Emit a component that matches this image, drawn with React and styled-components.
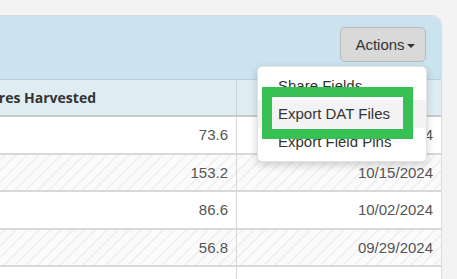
import styled, { createGlobalStyle } from "styled-components";

const Global = createGlobalStyle`
  html, body {
    margin: 0;
    padding: 0;
    background: #f3f3f3;
    font-family: "Liberation Sans", Arial, sans-serif;
    overflow: hidden;
  }
`;

const Page = styled.div`
  width: 457px;
  height: 279px;
  overflow: hidden;
  padding-top: 15px;
  box-sizing: border-box;
`;

const Panel = styled.div`
  position: relative;
  margin-left: -40px;
  width: 482px;
  box-sizing: border-box;
  border: 1px solid #d4dde1;
  border-radius: 10px;
  background: #fff;
`;

const PanelHeader = styled.div`
  height: 64px;
  box-sizing: border-box;
  background: #cbe3ee;
  border-bottom: 1px solid #b9d0db;
  border-radius: 9px 9px 0 0;
  display: flex;
  justify-content: flex-end;
  align-items: flex-start;
  padding: 11px 15px 0 0;
`;

const ActionsWrap = styled.div`
  position: relative;
`;

const ActionsButton = styled.button`
  height: 35px;
  width: 86px;
  box-sizing: border-box;
  border: 1px solid #b9b9b9;
  border-radius: 5px;
  background: #d9d9d9;
  color: #333;
  font-family: "Liberation Sans", Arial, sans-serif;
  font-size: 15px;
  padding: 0 0 0 4px;
  display: flex;
  align-items: center;
  justify-content: center;
`;

const Caret = styled.span`
  display: inline-block;
  width: 0;
  height: 0;
  margin-left: 2px;
  margin-top: 2px;
  border-top: 4px solid #333;
  border-left: 4px solid transparent;
  border-right: 4px solid transparent;
`;

const Menu = styled.div`
  position: absolute;
  top: 39px;
  right: -1px;
  width: 170px;
  box-sizing: border-box;
  padding: 5px 0;
  background: #fff;
  border: 1px solid #e2e2e2;
  border-radius: 5px;
  box-shadow: 0 3px 8px rgba(0, 0, 0, 0.18);
  z-index: 5;
`;

const MenuItem = styled.div`
  height: 28px;
  line-height: 28px;
  padding-left: 20px;
  font-size: 15px;
  color: #333;
  white-space: nowrap;
  background: ${(p) => (p.active ? "#f3f3f3" : "transparent")};
`;

const Highlight = styled.div`
  position: absolute;
  left: 4px;
  top: 20px;
  width: 151px;
  height: 52px;
  box-sizing: border-box;
  border: 10px solid #36c152;
  pointer-events: none;
`;

const Row = styled.div`
  display: grid;
  grid-template-columns: 276px 1fr;
  height: ${(p) => (p.head ? "37px" : "37.5px")};
  box-sizing: border-box;
  border-bottom: 2px solid ${(p) => (p.head ? "#c6c9cb" : "#d9d9d9")};
  background: ${(p) =>
    p.head
      ? "#dfedf3"
      : p.striped
      ? "repeating-linear-gradient(135deg, #fbfbfb 0px, #fbfbfb 6px, #f1f1f1 6px, #f1f1f1 8px)"
      : "#fff"};
`;

const Cell = styled.div`
  display: flex;
  align-items: center;
  justify-content: ${(p) => (p.left ? "flex-start" : "flex-end")};
  padding: ${(p) => (p.left ? "0 0 0 21px" : "0 8px 0 0")};
  border-right: ${(p) => (p.first ? "1px solid #d6d6d6" : "none")};
  color: #555;
  font-size: 15px;
  white-space: nowrap;
  overflow: hidden;
`;

const HeadCell = styled(Cell)`
  font-family: "Open Sans", "Liberation Sans", sans-serif;
  font-weight: 700;
  font-size: 14px;
  color: #333;
  border-right-color: #c9d3d8;
`;

const rows = [
  { acres: "73.6", date: "10/17/2024" },
  { acres: "153.2", date: "10/15/2024" },
  { acres: "86.6", date: "10/02/2024" },
  { acres: "56.8", date: "09/29/2024" },
  { acres: "41.0", date: "09/20/2024" },
];

export default function App() {
  return (
    <Page>
      <Global />
      <Panel>
        <PanelHeader>
          <ActionsWrap>
            <ActionsButton>
              Actions
              <Caret />
            </ActionsButton>
            <Menu>
              <MenuItem>Share Fields</MenuItem>
              <MenuItem active>Export DAT Files</MenuItem>
              <MenuItem>Export Field Pins</MenuItem>
              <Highlight />
            </Menu>
          </ActionsWrap>
        </PanelHeader>
        <Row head>
          <HeadCell first left>
            Acres Harvested
          </HeadCell>
          <HeadCell left>Date</HeadCell>
        </Row>
        {rows.map((r, i) => (
          <Row key={i} striped={i % 2 === 1}>
            <Cell first>{r.acres}</Cell>
            <Cell>{r.date}</Cell>
          </Row>
        ))}
      </Panel>
    </Page>
  );
}
